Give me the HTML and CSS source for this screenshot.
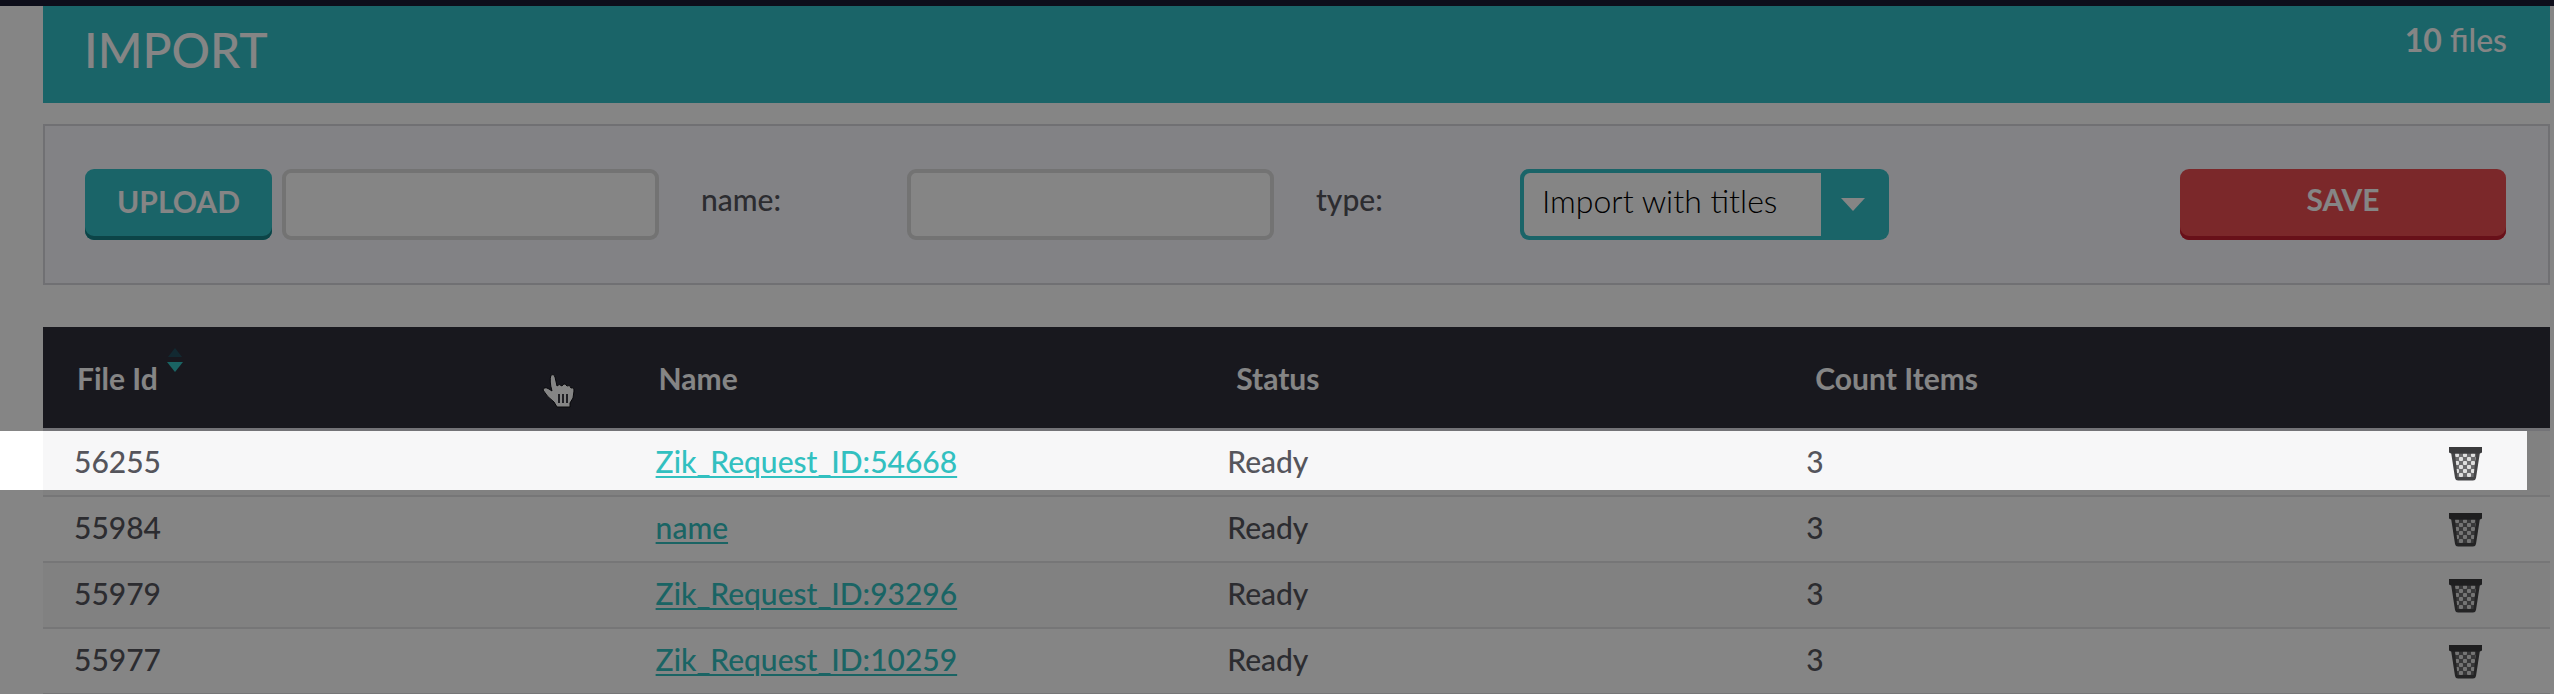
FILE: index.html
```
<!DOCTYPE html>
<html lang="en">
<head>
<meta charset="utf-8">
<title>Import</title>
<link rel="stylesheet" href="styles.css">
</head>
<body>
<svg class="defs" aria-hidden="true">
  <defs>
    <pattern id="mesh" x="6" y="6" width="8" height="8" patternUnits="userSpaceOnUse">
      <rect width="8" height="8" fill="#6c6c6e"/>
      <rect x="0" y="0" width="4" height="4" rx="1" fill="#dedede"/>
      <rect x="4" y="4" width="4" height="4" rx="1" fill="#dedede"/>
    </pattern>
    <symbol id="trash" viewBox="0 0 33 34">
      <path d="M2 5H31L27 31Q26.500 33.500 24 33.500H9Q6.500 33.500 6 31Z" fill="#454547"/>
      <path d="M6 6.500H27L24.500 30H8.500Z" fill="url(#mesh)"/>
      <path d="M0 0H33V5.500L31 6.500H2L0 5.500Z" fill="#3b3b3d"/>
    </symbol>
  </defs>
</svg>
<div class="top-strip"></div>
<main class="page">
  <header class="title-bar">
    <h1 class="title">IMPORT</h1>
    <p class="count"><strong>10</strong> files</p>
  </header>

  <form class="panel">
    <div class="field upload">
      <button class="btn btn-upload" type="button">UPLOAD</button>
      <input class="text-box" type="text" aria-label="File">
    </div>
    <label class="label" for="name">name:</label>
    <div class="field"><input class="text-box" id="name" type="text"></div>
    <label class="label" for="type">type:</label>
    <div class="select-cell">
      <div class="select-box">
        <select class="select" id="type"><option>Import with titles</option></select>
        <svg class="caret" viewBox="0 0 24 13" aria-hidden="true"><path d="M0 0H24L12 13Z" fill="#fff"/></svg>
      </div>
    </div>
    <button class="btn btn-save" type="button">SAVE</button>
  </form>

  <div class="table-wrap">
    <table class="files">
      <colgroup><col class="c-id"><col class="c-name"><col class="c-status"><col class="c-count"><col class="c-action"></colgroup>
      <thead>
        <tr>
          <th scope="col"><span class="sortable">File Id
            <svg class="sort" viewBox="0 0 16 24" aria-hidden="true"><path d="M8 0L15 9H1Z" fill="#24505f"/><path d="M0 14H16L8 24Z" fill="#32c0c0"/></svg></span></th>
          <th scope="col">Name</th>
          <th scope="col">Status</th>
          <th scope="col">Count Items</th>
          <th></th>
        </tr>
      </thead>
      <tbody>
        <tr><td>56255</td><td><a class="link" href="#">Zik_Request_ID:54668</a></td><td>Ready</td><td>3</td><td class="action"><button class="delete" type="button" aria-label="Delete 56255"><svg class="trash"><use href="#trash"/></svg></button></td></tr>
        <tr><td>55984</td><td><a class="link" href="#">name</a></td><td>Ready</td><td>3</td><td class="action"><button class="delete" type="button" aria-label="Delete 55984"><svg class="trash"><use href="#trash"/></svg></button></td></tr>
        <tr><td>55979</td><td><a class="link" href="#">Zik_Request_ID:93296</a></td><td>Ready</td><td>3</td><td class="action"><button class="delete" type="button" aria-label="Delete 55979"><svg class="trash"><use href="#trash"/></svg></button></td></tr>
        <tr><td>55977</td><td><a class="link" href="#">Zik_Request_ID:10259</a></td><td>Ready</td><td>3</td><td class="action"><button class="delete" type="button" aria-label="Delete 55977"><svg class="trash"><use href="#trash"/></svg></button></td></tr>
      </tbody>
    </table>
    <svg class="pointer" viewBox="0 0 34 36" aria-hidden="true">
      <path d="M9 2Q12 0 13 4L15 13Q17 10 20 13Q22 9 25 13Q28 11 29 15Q32 14 32 18L31 25L28 30V34H15L12 29Q5 24 1 17Q2 13 7 16L10 18Q7 8 9 2Z" fill="#fff" stroke="#0c0c12" stroke-width="1"/>
      <path d="M17 21V30M21 21V30M25 21V30" stroke="#3c3c46" stroke-width="2" fill="none"/>
    </svg>
    <div class="spotlight"></div>
  </div>
</main>
</body>
</html>
```
FILE: styles.css
```
* { box-sizing: border-box; }

body {
  margin: 0;
  height: 100vh;
  overflow: hidden;
  background: #fff;
  color: #55555c;
  font: 500 30px/36px Lato, "Liberation Sans", sans-serif;
}

.defs { position: absolute; width: 0; height: 0; }

.top-strip { height: 6px; background: #191c32; }

.page { padding: 0 4px 0 43px; }

.title-bar {
  display: flex;
  justify-content: space-between;
  align-items: flex-start;
  height: 97px;
  padding: 16px 43px 0 41px;
  background: #32c0c8;
  color: #fff;
}

.title { margin: 0; font-size: 48px; line-height: 56px; font-weight: 500; }

.count { margin: 0; font-size: 32px; line-height: 36px; }

.panel {
  display: grid;
  grid-template-columns: 616fr 206fr 409fr 204fr 660fr 326fr;
  margin: 21px 0 42px;
  padding: 43px 42px 43px 40px;
  border: 2px solid #d7d7dc;
  background: #f9f9ff;
}

.panel > * { min-width: 0; }

.field { display: flex; padding-right: 42px; }

.upload { gap: 10px; }

.btn {
  height: 71px;
  padding: 0 0 8px;
  border: 0;
  border-radius: 9px;
  color: #fff;
  font: 700 30px/36px Lato, "Liberation Sans", sans-serif;
}

.btn-upload { flex: none; width: 187px; background: #32c0c8; box-shadow: inset 0 -4px #178389; }

.btn-save { padding-bottom: 12px; background: #eb4d51; box-shadow: inset 0 -4px #c81f30; }

.text-box {
  flex: 1;
  min-width: 0;
  height: 71px;
  padding: 0 16px;
  border: 4px solid #dcdcdc;
  border-radius: 9px;
  background: #fff;
  font: inherit;
}

.label { padding-top: 12px; }

.select-box {
  display: flex;
  align-items: center;
  width: 369px;
  height: 71px;
  padding: 4px 24px 4px 4px;
  border-radius: 9px;
  background: #32c0c8;
}

.select {
  appearance: none;
  flex: 1;
  height: 100%;
  min-width: 0;
  margin-right: 20px;
  padding: 0 0 8px 18px;
  border: 0;
  border-radius: 6px 0 0 6px;
  background: #fff;
  color: #000;
  font: 300 32px/40px Lato, "Liberation Sans", sans-serif;
}

.caret { flex: none; width: 24px; height: 13px; }

.table-wrap { position: relative; }

.files { width: 100%; table-layout: fixed; border-collapse: separate; border-spacing: 0; }

.c-id { width: 23.2%; }
.c-name { width: 22.8%; }
.c-status { width: 23.1%; }
.c-count { width: 23.3%; }

th {
  height: 104px;
  padding: 0 0 0 34px;
  border-bottom: 3px solid #dcdce4;
  background: #2e2e3b;
  color: #fff;
  font-weight: 700;
  text-align: left;
}

th:nth-child(n+3) { padding-left: 40px; }

td {
  height: 66px;
  padding: 0 0 4px 31px;
  border-bottom: 2px solid #e2e2e4;
}

tbody tr:nth-child(odd) { background: #f7f7f8; }

.sortable { display: inline-flex; align-items: flex-start; gap: 9px; }

.sort { width: 16px; height: 24px; margin-top: -12px; }

.link { color: #32c0c0; text-decoration-thickness: 2px; text-underline-offset: 3px; }

.action { padding: 0 68px 4px 0; text-align: right; }

.delete { display: inline-block; padding: 0; border: 0; background: none; vertical-align: middle; }

.trash { display: block; width: 33px; height: 34px; }

.pointer { position: absolute; left: 499px; top: 46px; width: 34px; height: 36px; }

/* Dims everything except the first row */
.spotlight {
  position: absolute;
  top: 104px;
  left: -43px;
  right: 23px;
  height: 59px;
  box-shadow: 0 0 0 4000px rgba(0, 0, 0, 0.48);
  pointer-events: none;
}
```
